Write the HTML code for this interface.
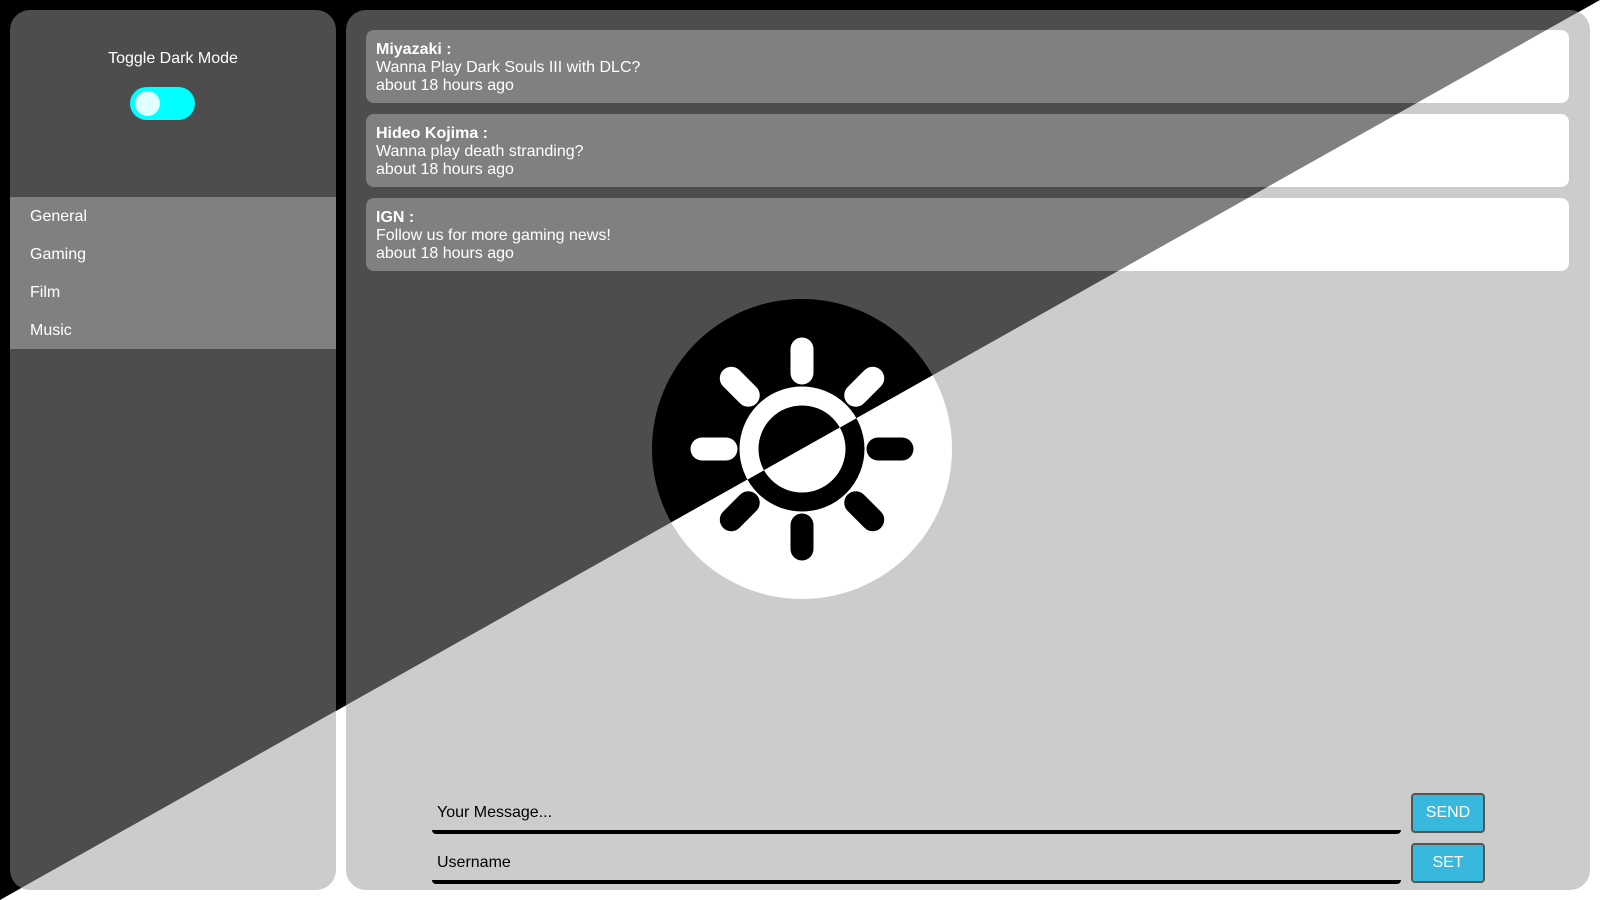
<!DOCTYPE html>
<html><head><meta charset="utf-8"><style>
*{margin:0;padding:0;box-sizing:border-box}
html,body{width:1600px;height:900px;overflow:hidden}
body{font-family:"Liberation Sans",Arial,sans-serif;position:relative}
.layer{position:absolute;left:0;top:0;width:1600px;height:900px}
.dark{background:#000;color:#fff}
.light{background:#fff;color:#fff;clip-path:polygon(0 900px,1600px 0,1600px 900px)}
.lp{position:absolute;left:10px;top:10px;width:326px;height:880px;border-radius:20px}
.rp{position:absolute;left:346px;top:10px;width:1244px;height:880px;border-radius:20px}
.dark .lp,.dark .rp{background:#4d4d4d}
.light .lp,.light .rp{background:#ccc}
.tt{position:absolute;left:0;width:326px;top:40px;text-align:center;font-size:16px}
.tog{position:absolute;left:120px;top:77px;width:65px;height:33px;border-radius:17px;background:#0ff}
.tog i{position:absolute;left:5px;top:4px;width:25px;height:25px;border-radius:50%;background:#e0ffff}
.nav{position:absolute;left:0;top:187px;width:326px;height:152px;background:#808080;padding-top:1px}
.nav div{height:38px;line-height:38px;padding-left:20px;font-size:16px}
.card{position:absolute;left:20px;width:1203px;height:73px;border-radius:8px;padding:11px 10px 0;font-size:16px;line-height:18px}
.dark .card{background:#808080}
.light .card{background:#fff}
.sun{position:absolute;left:306px;top:289px}
.inp{position:absolute;left:86px;width:969px;height:42px;border-bottom:4px solid #000;border-radius:0 0 4px 4px;font-size:16px;color:#000;padding-left:5px;line-height:42px}
.btn{position:absolute;left:1065px;width:74px;height:40px;background:#38b8dd;border:2px solid #555;border-radius:4px;color:#fff;font-size:16px;text-align:center;line-height:36px}
</style></head><body>

<div class="layer dark">
 <div class="lp">
  <div class="tt">Toggle Dark Mode</div>
  <div class="tog"><i></i></div>
  <div class="nav"><div>General</div><div>Gaming</div><div>Film</div><div>Music</div></div>
 </div>
 <div class="rp">
  <div class="card" style="top:20px"><b>Miyazaki :</b><br>Wanna Play Dark Souls III with DLC?<br>about 18 hours ago</div>
  <div class="card" style="top:104px"><b>Hideo Kojima :</b><br>Wanna play death stranding?<br>about 18 hours ago</div>
  <div class="card" style="top:188px"><b>IGN :</b><br>Follow us for more gaming news!<br>about 18 hours ago</div>
  <svg class="sun" width="300" height="300" viewBox="-150 -150 300 300">
   <circle r="150" fill="#000"/>
   <g stroke="#fff" stroke-width="23" stroke-linecap="round" fill="none">
    <circle r="53" stroke-width="19"/>
    <line x1="0" y1="-76" x2="0" y2="-100"/>
    <line x1="0" y1="-76" x2="0" y2="-100" transform="rotate(45)"/>
    <line x1="0" y1="-76" x2="0" y2="-100" transform="rotate(90)"/>
    <line x1="0" y1="-76" x2="0" y2="-100" transform="rotate(135)"/>
    <line x1="0" y1="-76" x2="0" y2="-100" transform="rotate(180)"/>
    <line x1="0" y1="-76" x2="0" y2="-100" transform="rotate(225)"/>
    <line x1="0" y1="-76" x2="0" y2="-100" transform="rotate(270)"/>
    <line x1="0" y1="-76" x2="0" y2="-100" transform="rotate(315)"/>
   </g>
  </svg>
 </div>
</div>

<div class="layer light">
 <div class="lp"></div>
 <div class="rp">
  <div class="card" style="top:20px"></div>
  <div class="card" style="top:104px"></div>
  <div class="card" style="top:188px"></div>
  <svg class="sun" width="300" height="300" viewBox="-150 -150 300 300">
   <circle r="150" fill="#fff"/>
   <g stroke="#000" stroke-width="23" stroke-linecap="round" fill="none">
    <circle r="53" stroke-width="19"/>
    <line x1="0" y1="-76" x2="0" y2="-100"/>
    <line x1="0" y1="-76" x2="0" y2="-100" transform="rotate(45)"/>
    <line x1="0" y1="-76" x2="0" y2="-100" transform="rotate(90)"/>
    <line x1="0" y1="-76" x2="0" y2="-100" transform="rotate(135)"/>
    <line x1="0" y1="-76" x2="0" y2="-100" transform="rotate(180)"/>
    <line x1="0" y1="-76" x2="0" y2="-100" transform="rotate(225)"/>
    <line x1="0" y1="-76" x2="0" y2="-100" transform="rotate(270)"/>
    <line x1="0" y1="-76" x2="0" y2="-100" transform="rotate(315)"/>
   </g>
  </svg>
  <div class="inp" style="top:782px">Your Message...</div>
  <div class="btn" style="top:783px">SEND</div>
  <div class="inp" style="top:832px">Username</div>
  <div class="btn" style="top:833px">SET</div>
 </div>
</div>
</body></html>
